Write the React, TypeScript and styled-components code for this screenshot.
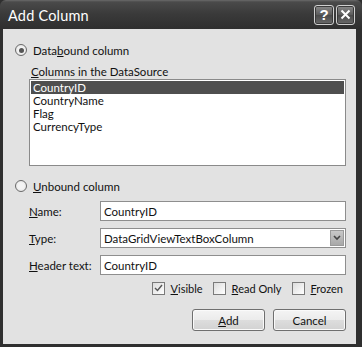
import React from 'react';
import styled, { createGlobalStyle } from 'styled-components';

const Global = createGlobalStyle`
  html, body { margin: 0; padding: 0; background: #ffffff; }
  body { font-family: Lato, "Open Sans", sans-serif; }
`;

const Frame = styled.div`
  width: 362px;
  height: 347px;
  box-sizing: border-box;
  display: flex;
  flex-direction: column;
  background: #2f2f2f;
  padding: 0 6px 3px 3px;
`;

const TitleBar = styled.div`
  height: 29px;
  margin: 0 -6px 0 -3px;
  display: flex;
  align-items: center;
  padding: 0 7px 0 8px;
  background: linear-gradient(#6a6a6a 0px, #4a4a4a 2px, #3a3a3a 14px, #2f2f2f 29px);
  border-top-left-radius: 6px;
  border-top-right-radius: 6px;
`;

const Title = styled.div`
  flex: 1;
  color: #ffffff;
  font-family: Lato, sans-serif;
  font-size: 14.5px;
  letter-spacing: 0.2px;
  margin-top: 1px;
`;

const CapButton = styled.div<{ $w: number }>`
  width: ${p => p.$w}px;
  height: 20px;
  box-sizing: border-box;
  margin-left: 2px;
  border: 1px solid #d0d0d0;
  border-radius: 3px;
  background: linear-gradient(#8a8a8a, #5a5a5a 50%, #4a4a4a 51%, #6a6a6a);
  box-shadow: inset 0 0 0 1px #3a3a3a;
  display: flex;
  align-items: center;
  justify-content: center;
  color: #ffffff;
  font-family: "Liberation Sans", sans-serif;
  font-weight: bold;
  font-size: 15px;
`;

const Body = styled.div`
  flex: 1;
  background: #e2e2e2;
  display: flex;
  flex-direction: column;
  padding: 13px 10px 0 12px;
  font-family: Lato, sans-serif;
  font-size: 11.5px;
  color: #111;
`;

const RadioRow = styled.label`
  display: flex;
  align-items: center;
  height: 16px;
  gap: 6px;
`;

const RadioDot = styled.span<{ $on?: boolean }>`
  width: 12px;
  height: 12px;
  box-sizing: border-box;
  border-radius: 50%;
  border: 1px solid #6a6a6a;
  background: radial-gradient(circle, #f4f4f4 40%, #dcdcdc 100%);
  display: flex;
  align-items: center;
  justify-content: center;
  &::after {
    content: '';
    display: ${p => (p.$on ? 'block' : 'none')};
    width: 5px;
    height: 5px;
    border-radius: 50%;
    background: #555;
  }
`;

const Indented = styled.div`
  padding-left: 14px;
  display: flex;
  flex-direction: column;
`;

const ListLabel = styled.div`
  height: 14px;
  line-height: 14px;
  margin: 7px 0 0 2px;
`;

const ListBox = styled.div`
  height: 87px;
  box-sizing: border-box;
  border: 1px solid #8a8a8a;
  background: #ffffff;
  padding: 1px;
`;

const Item = styled.div<{ $sel?: boolean }>`
  height: 13px;
  line-height: 13px;
  padding-left: 2px;
  overflow: hidden;
  background: ${p => (p.$sel ? '#4f4f4f' : 'transparent')};
  color: ${p => (p.$sel ? '#ffffff' : '#111')};
`;

const Spacer = styled.div<{ $h: number }>`
  height: ${p => p.$h}px;
`;

const Fields = styled.div`
  display: grid;
  grid-template-columns: 71px 1fr;
  row-gap: 7px;
  align-items: center;
`;

const FieldLabel = styled.div`
  padding-left: 0;
`;

const TextBox = styled.div`
  height: 20px;
  box-sizing: border-box;
  border: 1px solid #8e8e8e;
  background: #ffffff;
  display: flex;
  align-items: center;
  padding-left: 3px;
`;

const DropArrow = styled.div`
  width: 14px;
  height: 16px;
  margin-left: auto;
  margin-right: 1px;
  background: linear-gradient(#c8c8c8, #a8a8a8);
  border: 1px solid #9a9a9a;
  box-sizing: border-box;
  display: flex;
  align-items: center;
  justify-content: center;
`;

const Checks = styled.div`
  display: flex;
  justify-content: flex-end;
  align-items: center;
  gap: 10px;
  margin: 6px 3px 0 0;
  height: 14px;
  font-size: 11px;
`;

const CheckRow = styled.label`
  display: flex;
  align-items: center;
  gap: 6px;
`;

const Box = styled.span`
  width: 13px;
  height: 13px;
  box-sizing: border-box;
  border: 1px solid #7a7a7a;
  background: linear-gradient(135deg, #dcdcdc, #ffffff);
  display: flex;
  align-items: center;
  justify-content: center;
`;

const Buttons = styled.div`
  display: flex;
  justify-content: flex-end;
  gap: 8px;
  margin-top: 14px;
`;

const Button = styled.div`
  width: 73px;
  height: 22px;
  box-sizing: border-box;
  border: 1px solid #6f6f6f;
  border-radius: 3px;
  background: linear-gradient(#f4f4f4, #ebebeb 50%, #dddddd 51%, #d2d2d2);
  box-shadow: inset 0 0 0 1px #fafafa;
  display: flex;
  align-items: center;
  justify-content: center;
`;

const Key = styled.span`
  text-decoration: underline;
  text-underline-offset: 1px;
`;

const columns = ['CountryID', 'CountryName', 'Flag', 'CurrencyType'];

const Check = ({ on }: { on?: boolean }) => (
  <Box>
    {on && (
      <svg width="9" height="8" viewBox="0 0 9 8">
        <path d="M1 4 L3.5 6.5 L8 1" fill="none" stroke="#555" strokeWidth="1.4" />
      </svg>
    )}
  </Box>
);

const App: React.FC = () => (
  <Frame>
    <Global />
    <TitleBar>
      <Title>Add Column</Title>
      <CapButton $w={20}>?</CapButton>
      <CapButton $w={19}>
        <svg width="11" height="11" viewBox="0 0 11 11">
          <path d="M1.5 1.5 L9.5 9.5 M9.5 1.5 L1.5 9.5" stroke="#fff" strokeWidth="2" />
        </svg>
      </CapButton>
    </TitleBar>
    <Body>
      <RadioRow>
        <RadioDot $on />
        <span>Data<Key>b</Key>ound column</span>
      </RadioRow>
      <Indented>
        <ListLabel><Key>C</Key>olumns in the DataSource</ListLabel>
        <ListBox>
          {columns.map((c, i) => (
            <Item key={c} $sel={i === 0}>{c}</Item>
          ))}
        </ListBox>
      </Indented>
      <Spacer $h={12} />
      <RadioRow>
        <RadioDot />
        <span><Key>U</Key>nbound column</span>
      </RadioRow>
      <Spacer $h={7} />
      <Indented>
        <Fields>
          <FieldLabel><Key>N</Key>ame:</FieldLabel>
          <TextBox>CountryID</TextBox>
          <FieldLabel><Key>T</Key>ype:</FieldLabel>
          <TextBox>
            DataGridViewTextBoxColumn
            <DropArrow>
              <svg width="8" height="6" viewBox="0 0 8 6">
                <path d="M1 1 L4 4 L7 1" fill="none" stroke="#444" strokeWidth="1.6" />
              </svg>
            </DropArrow>
          </TextBox>
          <FieldLabel><Key>H</Key>eader text:</FieldLabel>
          <TextBox>CountryID</TextBox>
        </Fields>
        <Checks>
          <CheckRow><Check on /><span><Key>V</Key>isible</span></CheckRow>
          <CheckRow><Check /><span><Key>R</Key>ead Only</span></CheckRow>
          <CheckRow><Check /><span><Key>F</Key>rozen</span></CheckRow>
        </Checks>
        <Buttons>
          <Button><span><Key>A</Key>dd</span></Button>
          <Button>Cancel</Button>
        </Buttons>
      </Indented>
    </Body>
  </Frame>
);

export default App;
